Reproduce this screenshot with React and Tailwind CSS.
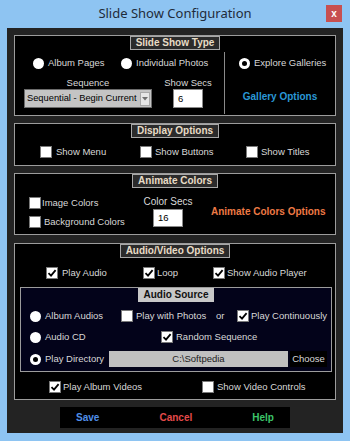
import React from "react";

const F = { fontFamily: '"Liberation Sans", Arial, sans-serif' };

function Radio({ on }) {
  return (
    <span className="w-[11px] h-[11px] rounded-full bg-white flex items-center justify-center shrink-0">
      {on && <span className="w-[5px] h-[5px] rounded-full bg-black" />}
    </span>
  );
}

function Check({ on }) {
  return (
    <span className="w-[12px] h-[12px] bg-white border border-[#7a7a7a] flex items-center justify-center shrink-0">
      {on && (
        <svg width="10" height="10" viewBox="0 0 10 10">
          <path d="M1.5 5.2 L4 7.6 L8.6 2.2" fill="none" stroke="#000" strokeWidth="1.8" />
        </svg>
      )}
    </span>
  );
}

function Label({ children, light }) {
  return (
    <div
      className={
        light
          ? "self-center h-[14px] px-[5px] bg-[#c8c8c8] text-[#111] font-bold text-[10px] leading-[14px] whitespace-nowrap"
          : "self-center h-[14px] px-[5px] bg-[#2b2b2b] border border-[#a8a8a8] text-[#e8dcc6] font-bold text-[10px] leading-[12px] whitespace-nowrap"
      }
    >
      {children}
    </div>
  );
}

function Item({ children, className = "", gap = "gap-[4px]" }) {
  return <div className={`flex items-center ${gap} whitespace-nowrap ${className}`}>{children}</div>;
}

export default function App() {
  return (
    <div className="w-[350px] h-[441px] bg-[#8ec4f2] flex flex-col text-[9.5px] text-[#d8d8d8]" style={F}>
      {/* title bar */}
      <div className="relative h-[28px] flex items-center justify-center">
        <span className="text-[13px] text-[#1f2b3a] leading-none mt-[-1px]" style={{ fontFamily: '"Noto Sans", "Open Sans", sans-serif' }}>
          Slide Show Configuration
        </span>
        <div className="absolute right-[8px] top-[5px] w-[16px] h-[17px] bg-[#c75050] flex items-center justify-center text-white text-[10px] font-bold leading-none">
          x
        </div>
      </div>

      {/* content */}
      <div className="mx-[7px] h-[405px] bg-[#232323] flex flex-col">
        {/* Slide Show Type */}
        <div className="mx-[7px] mt-[7px] h-[81px] border border-[#9c9c9c] bg-black flex flex-col">
          <Label>Slide Show Type</Label>
          <div className="flex flex-1 mt-[2px] mb-[1px]">
            <div className="w-[209px] flex flex-col">
              <div className="flex mt-[5px] h-[12px] pl-[18px]">
                <Item className="w-[88px]"><Radio /><span>Album Pages</span></Item>
                <Item><Radio /><span>Individual Photos</span></Item>
              </div>
              <div className="flex mt-[8px]">
                <div className="ml-[9px] w-[128px] flex flex-col items-center">
                  <span className="h-[11px] leading-[11px]">Sequence</span>
                  <div className="mt-[1px] w-[128px] h-[19px] border border-[#6c6c6c] bg-[#c4c4c4] flex items-center pl-[2px] pr-[1px]">
                    <span className="flex-1 text-black text-[9.3px] leading-none whitespace-nowrap overflow-hidden">Sequential - Begin Current</span>
                    <span className="w-[10px] h-[14px] bg-[#e6e6e6] border border-[#a8a8a8] flex items-center justify-center">
                      <svg width="6" height="4" viewBox="0 0 6 4"><path d="M0 0 H6 L3 3.5 Z" fill="#707070" /></svg>
                    </span>
                  </div>
                </div>
                <div className="ml-[10px] w-[52px] flex flex-col items-center">
                  <span className="h-[11px] leading-[11px] whitespace-nowrap">Show Secs</span>
                  <div className="mt-[1px] w-[30px] h-[19px] bg-white border border-[#8a8a8a] text-black flex items-center pl-[4px] leading-none">6</div>
                </div>
              </div>
            </div>
            <div className="flex-1 border-l border-[#8a8a8a] flex flex-col">
              <div className="mt-[5px] h-[12px] pl-[14px] flex">
                <Item><Radio on /><span>Explore Galleries</span></Item>
              </div>
              <div className="mt-[22px] text-center font-bold text-[10px] text-[#2a98d6] leading-[11px]">Gallery Options</div>
            </div>
          </div>
        </div>

        {/* Display Options */}
        <div className="mx-[7px] mt-[7px] h-[43px] border border-[#9c9c9c] bg-black flex flex-col">
          <Label>Display Options</Label>
          <div className="flex mt-[8px] h-[12px] pl-[25px]">
            <Item className="w-[100px]"><Check /><span>Show Menu</span></Item>
            <Item className="w-[106px]" gap="gap-[3px]"><Check /><span>Show Buttons</span></Item>
            <Item gap="gap-[3px]"><Check /><span>Show Titles</span></Item>
          </div>
        </div>

        {/* Animate Colors */}
        <div className="mx-[7px] mt-[7px] h-[62px] border border-[#9c9c9c] bg-black flex flex-col">
          <Label>Animate Colors</Label>
          <div className="flex flex-1">
            <div className="w-[123px] pl-[14px] flex flex-col">
              <Item className="mt-[9px] h-[12px]" gap="gap-[1px]"><Check /><span>Image Colors</span></Item>
              <Item className="mt-[7px] h-[12px]" gap="gap-[3px]"><Check /><span>Background Colors</span></Item>
            </div>
            <div className="w-[60px] flex flex-col items-center">
              <span className="mt-[8px] h-[11px] leading-[11px] whitespace-nowrap text-[10px]">Color Secs</span>
              <div className="mt-[2px] w-[30px] h-[18px] bg-white border border-[#8a8a8a] text-black flex items-center pl-[4px] leading-none">16</div>
            </div>
            <div className="ml-[13px] self-center font-bold text-[10px] text-[#ee7a45] whitespace-nowrap mt-[1px]">Animate Colors Options</div>
          </div>
        </div>

        {/* Audio/Video Options */}
        <div className="mx-[7px] mt-[8px] h-[157px] border border-[#9c9c9c] bg-black flex flex-col">
          <Label>Audio/Video Options</Label>
          <div className="flex mt-[9px] h-[12px] pl-[31px]">
            <Item className="w-[97px]"><Check on /><span>Play Audio</span></Item>
            <Item className="w-[70px]" gap="gap-[2px]"><Check on /><span>Loop</span></Item>
            <Item gap="gap-[2px]"><Check on /><span>Show Audio Player</span></Item>
          </div>

          <div className="ml-[5px] mr-[3px] mt-[8px] h-[85px] border border-[#9c9c9c] bg-[#03031a] flex flex-col">
            <Label light>Audio Source</Label>
            <div className="flex mt-[8px] h-[12px] pl-[9px]">
              <Item className="w-[91px]"><Radio /><span>Album Audios</span></Item>
              <Item className="w-[95px]" gap="gap-[3px]"><Check /><span>Play with Photos</span></Item>
              <span className="w-[21px] flex items-center">or</span>
              <Item gap="gap-[2px]"><Check on /><span>Play Continuously</span></Item>
            </div>
            <div className="flex mt-[9px] h-[12px] pl-[9px]">
              <Item className="w-[131px]"><Radio /><span>Audio CD</span></Item>
              <Item gap="gap-[3px]"><Check on /><span>Random Sequence</span></Item>
            </div>
            <div className="flex mt-[8px] h-[16px] pl-[9px] items-center">
              <Item className="w-[79px]"><Radio on /><span>Play Directory</span></Item>
              <div className="w-[179px] h-[16px] bg-[#c0c0c0] text-[#202020] flex items-center justify-center leading-none">C:\Softpedia</div>
              <div className="ml-[2px] w-[37px] h-[16px] bg-black flex items-center justify-center leading-none">Choose</div>
            </div>
          </div>

          <div className="flex mt-[9px] h-[12px] pl-[34px]">
            <Item className="w-[153px]" gap="gap-[2px]"><Check on /><span>Play Album Videos</span></Item>
            <Item gap="gap-[3px]"><Check /><span>Show Video Controls</span></Item>
          </div>
        </div>

        {/* Buttons */}
        <div className="ml-[53px] mt-[7px] w-[230px] h-[21px] bg-black flex items-center justify-between px-[16px] font-bold text-[10px]">
          <span className="text-[#4f8ee8]">Save</span>
          <span className="text-[#e34a4a]">Cancel</span>
          <span className="text-[#3cc46a]">Help</span>
        </div>
      </div>
    </div>
  );
}
